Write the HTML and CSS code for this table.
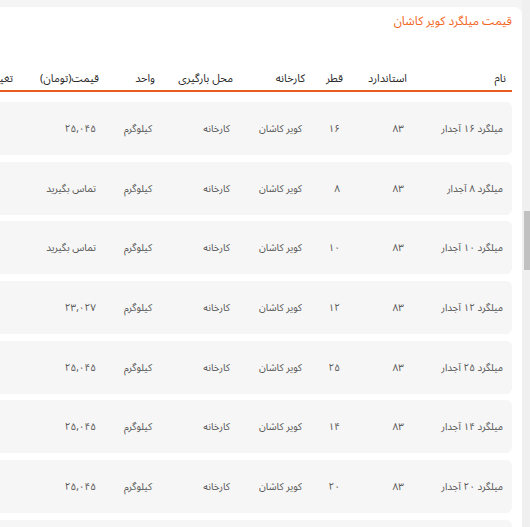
FILE: index.html
```html
<!DOCTYPE html>
<html lang="fa" dir="rtl">
<head>
<meta charset="utf-8">
<title>قیمت میلگرد کویر کاشان</title>
<link rel="stylesheet" href="styles.css">
</head>
<body>
<div class="page">
  <div class="scrollbar"><div class="thumb"></div></div>
  <div class="main">
    <div class="card">
      <h2 class="title">قیمت میلگرد کویر کاشان</h2>
      <div class="table">
        <div class="row head">
          <div>نام</div><div>استاندارد</div><div>قطر</div><div>کارخانه</div><div>محل بارگیری</div><div>واحد</div><div>قیمت(تومان)</div><div>تغییرات</div>
        </div>
        <div class="body">
          <div class="row item"><div>میلگرد ۱۶ آجدار</div><div>۸۳</div><div>۱۶</div><div>کویر کاشان</div><div>کارخانه</div><div>کیلوگرم</div><div>۲۵,۰۴۵</div><div></div></div>
          <div class="row item"><div>میلگرد ۸ آجدار</div><div>۸۳</div><div>۸</div><div>کویر کاشان</div><div>کارخانه</div><div>کیلوگرم</div><div>تماس بگیرید</div><div></div></div>
          <div class="row item"><div>میلگرد ۱۰ آجدار</div><div>۸۳</div><div>۱۰</div><div>کویر کاشان</div><div>کارخانه</div><div>کیلوگرم</div><div>تماس بگیرید</div><div></div></div>
          <div class="row item"><div>میلگرد ۱۲ آجدار</div><div>۸۳</div><div>۱۲</div><div>کویر کاشان</div><div>کارخانه</div><div>کیلوگرم</div><div>۲۳,۰۲۷</div><div></div></div>
          <div class="row item"><div>میلگرد ۲۵ آجدار</div><div>۸۳</div><div>۲۵</div><div>کویر کاشان</div><div>کارخانه</div><div>کیلوگرم</div><div>۲۵,۰۴۵</div><div></div></div>
          <div class="row item"><div>میلگرد ۱۴ آجدار</div><div>۸۳</div><div>۱۴</div><div>کویر کاشان</div><div>کارخانه</div><div>کیلوگرم</div><div>۲۵,۰۴۵</div><div></div></div>
          <div class="row item"><div>میلگرد ۲۰ آجدار</div><div>۸۳</div><div>۲۰</div><div>کویر کاشان</div><div>کارخانه</div><div>کیلوگرم</div><div>۲۵,۰۴۵</div><div></div></div>
          <div class="row item"><div></div><div></div><div></div><div></div><div></div><div></div><div></div><div></div></div>
        </div>
      </div>
    </div>
  </div>
</div>
</body>
</html>
```

FILE: styles.css
```css
* { box-sizing: border-box; }
html, body {
  margin: 0;
  height: 100%;
  overflow: hidden;
  background: #f5f5f5;
}
body {
  font-family: "Noto Sans Arabic", "DejaVu Sans", sans-serif;
  direction: rtl;
}
.page {
  display: flex;
  flex-direction: row;
  height: 527px;
  overflow: hidden;
}
.scrollbar {
  flex: 0 0 8px;
  background: #f0f0f0;
  display: flex;
  flex-direction: column;
  align-items: flex-start;
}
.thumb {
  margin-top: 211px;
  width: 6px;
  height: 59px;
  background: #c1c1c1;
}
.main {
  flex: 1 1 auto;
  min-width: 0;
  padding-top: 7px;
  padding-left: 4px;
  overflow: hidden;
  display: flex;
  justify-content: flex-start;
}
.card {
  flex: 0 0 620px;
  background: #ffffff;
  border-radius: 8px 8px 0 0;
  padding: 6px 10px 0 0;
  overflow: hidden;
}
.title {
  margin: 0;
  font-size: 12px;
  line-height: 18px;
  font-weight: normal;
  color: #f26522;
}
.table {
  margin-top: 35px;
}
.row {
  display: grid;
  grid-template-columns: 99px 64px 38px 72px 78px 56px 86px 80px;
  align-items: center;
}
.head {
  height: 26px;
  border-bottom: 2px solid #e85a1e;
  font-size: 11px;
  font-weight: normal;
  color: #2a2a2a;
}
.head > div { padding-right: 6px; white-space: nowrap; }
.body {
  margin-top: 10px;
  display: flex;
  flex-direction: column;
  gap: 6.7px;
}
.item {
  height: 53px;
  background: #f6f6f6;
  border-radius: 6px;
  font-size: 10px;
  color: #555;
}
.item > div { padding-right: 9px; white-space: nowrap; }
```
